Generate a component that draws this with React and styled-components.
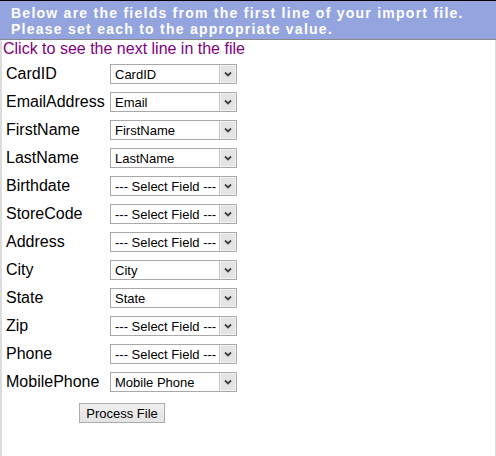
import React from 'react';
import styled, { createGlobalStyle } from 'styled-components';

const Global = createGlobalStyle`
  html, body {
    margin: 0;
    padding: 0;
    background: #fff;
    font-family: "Liberation Sans", Arial, sans-serif;
  }
`;

const Page = styled.div`
  width: 496px;
  height: 456px;
  display: flex;
  flex-direction: column;
  box-sizing: border-box;
`;

const Header = styled.div`
  background: #94a4df;
  border-top: 1px solid #000;
  border-bottom: 1px solid #8a8a8a;
  color: #fff;
  font-weight: bold;
  font-size: 14px;
  letter-spacing: 1.25px;
  line-height: 16px;
  padding: 4px 0 2px 11px;
  white-space: nowrap;
`;

const Body = styled.div`
  flex: 1;
  border-left: 2px solid #dcdcdc;
  border-right: 1px solid #dcdcdc;
  padding-left: 1px;
`;

const NextLink = styled.a`
  display: block;
  color: #800080;
  font-size: 16px;
  line-height: 18px;
  text-decoration: none;
  cursor: pointer;
`;

const Fields = styled.div`
  display: grid;
  grid-template-columns: 104px 127px;
  grid-auto-rows: 28px;
  align-items: center;
  margin-top: 2px;
  padding-left: 3px;
`;

const Label = styled.div`
  font-size: 16px;
  line-height: 18px;
  color: #000;
  white-space: nowrap;
`;

const SelectBox = styled.div`
  display: flex;
  height: 20px;
  box-sizing: border-box;
  border: 1px solid #a9a9a9;
  background: #fff;
`;

const NativeSelect = styled.select`
  flex: 1;
  min-width: 0;
  appearance: none;
  border: none;
  outline: none;
  background: transparent;
  font-family: "Liberation Sans", Arial, sans-serif;
  font-size: 13px;
  color: #000;
  padding: 0 0 0 4px;
  margin: 0;
`;

const Arrow = styled.span`
  width: 16px;
  display: flex;
  align-items: center;
  justify-content: center;
  background: #e4e4e4;
  border-left: 1px solid #c8c8c8;
  box-shadow: inset 0 0 0 1px #f2f2f2;
`;

const ButtonRow = styled.div`
  grid-column: 1 / span 2;
  align-self: start;
  display: flex;
  justify-content: center;
  padding-top: 7px;
  padding-left: 1px;
`;

const Button = styled.button`
  font-family: "Liberation Sans", Arial, sans-serif;
  font-size: 13px;
  height: 20px;
  padding: 0 6px;
  border: 1px solid #acacac;
  background: linear-gradient(#f0f0f0, #e3e3e3);
  color: #000;
`;

const fields = [
  ['CardID', 'CardID'],
  ['EmailAddress', 'Email'],
  ['FirstName', 'FirstName'],
  ['LastName', 'LastName'],
  ['Birthdate', '--- Select Field ---'],
  ['StoreCode', '--- Select Field ---'],
  ['Address', '--- Select Field ---'],
  ['City', 'City'],
  ['State', 'State'],
  ['Zip', '--- Select Field ---'],
  ['Phone', '--- Select Field ---'],
  ['MobilePhone', 'Mobile Phone'],
];

function FieldSelect({ value }) {
  return (
    <SelectBox>
      <NativeSelect defaultValue={value}>
        <option>{value}</option>
      </NativeSelect>
      <Arrow>
        <svg width="8" height="6" viewBox="0 0 8 6">
          <path d="M1 1.5 L4 4.5 L7 1.5" fill="none" stroke="#3f3f3f" strokeWidth="1.8" />
        </svg>
      </Arrow>
    </SelectBox>
  );
}

export default function App() {
  return (
    <Page>
      <Global />
      <Header>
        Below are the fields from the first line of your import file.
        <br />
        Please set each to the appropriate value.
      </Header>
      <Body>
        <NextLink>Click to see the next line in the file</NextLink>
        <Fields>
          {fields.map(([label, value]) => (
            <React.Fragment key={label}>
              <Label>{label}</Label>
              <FieldSelect value={value} />
            </React.Fragment>
          ))}
          <ButtonRow>
            <Button>Process File</Button>
          </ButtonRow>
        </Fields>
      </Body>
    </Page>
  );
}
